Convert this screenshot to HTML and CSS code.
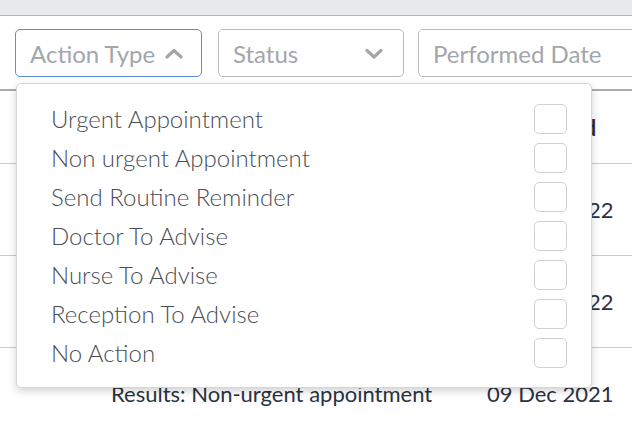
FILE: index.html
```html
<!DOCTYPE html>
<html>
<head>
<meta charset="utf-8">
<link rel="stylesheet" href="styles.css">
</head>
<body>
<div class="topbar"></div>
<div class="filters">
  <div class="select open">
    <span class="placeholder">Action Type</span>
    <svg class="chev" width="18" height="11" viewBox="0 0 18 11"><polyline points="2,9 9,2.5 16,9" fill="none" stroke="#a3a6ab" stroke-width="3.2" stroke-linecap="round" stroke-linejoin="round"/></svg>
    <div class="menu">
      <div class="item"><span>Urgent Appointment</span><span class="box"></span></div>
      <div class="item"><span>Non urgent Appointment</span><span class="box"></span></div>
      <div class="item"><span>Send Routine Reminder</span><span class="box"></span></div>
      <div class="item"><span>Doctor To Advise</span><span class="box"></span></div>
      <div class="item"><span>Nurse To Advise</span><span class="box"></span></div>
      <div class="item"><span>Reception To Advise</span><span class="box"></span></div>
      <div class="item"><span>No Action</span><span class="box"></span></div>
    </div>
  </div>
  <div class="select status">
    <span class="placeholder">Status</span>
    <svg class="chev" width="18" height="11" viewBox="0 0 18 11"><polyline points="2,2.5 9,9 16,2.5" fill="none" stroke="#a3a6ab" stroke-width="3.2" stroke-linecap="round" stroke-linejoin="round"/></svg>
  </div>
  <div class="select date">
    <span class="placeholder">Performed Date</span>
  </div>
</div>
<div class="grid">
  <div class="row head"><span></span><span></span><span class="hd">Performed</span></div>
  <div class="row"><span></span><span></span><span>09 Dec 2022</span></div>
  <div class="row"><span></span><span></span><span>08 Dec 2022</span></div>
  <div class="row"><span></span><span>Results: Non-urgent appointment</span><span>09 Dec 2021</span></div>
</div>
</body>
</html>
```
FILE: styles.css
```css
html, body {
  margin: 0;
  padding: 0;
  background: #ffffff;
  font-family: Lato, "Open Sans", sans-serif;
  overflow: hidden;
}
.topbar {
  height: 15px;
  background: #e8e9eb;
  border-bottom: 1px solid #b3b5b9;
}
.filters {
  display: flex;
  padding: 13px 0 0 15px;
}
.select {
  position: relative;
  box-sizing: border-box;
  height: 48px;
  border: 1px solid #b9bbbf;
  border-radius: 5px;
  display: flex;
  align-items: center;
  padding-left: 14px;
  flex: none;
}
.select.open {
  width: 187px;
  border-color: #5c8fd6;
  margin-right: 16px;
}
.select.status {
  width: 186px;
  margin-right: 14px;
  padding-right: 20px;
  justify-content: space-between;
}
.select.date {
  width: 260px;
}
.placeholder {
  font-size: 24px;
  color: #a3a6ab;
  white-space: nowrap;
}
.open .chev {
  margin-left: 10px;
}
.menu {
  position: absolute;
  left: 0;
  top: 53px;
  width: 576px;
  box-sizing: border-box;
  padding: 15px 24px 15px 34px;
  background: #fff;
  border: 1px solid #d4d6d9;
  border-radius: 5px;
  box-shadow: 0 3px 8px rgba(0,0,0,0.18);
  z-index: 2;
}
.item {
  height: 39px;
  display: flex;
  align-items: center;
  justify-content: space-between;
  font-family: "Lato Light", Lato, sans-serif;
  font-size: 24px;
  font-weight: 300;
  color: #4a4e56;
  white-space: nowrap;
}
.box {
  width: 33px;
  height: 30px;
  box-sizing: border-box;
  border: 1px solid #cfd1d4;
  border-radius: 5px;
}
.grid {
  margin-top: 12px;
  border-top: 2px solid #a9abaf;
  font-size: 22px;
  color: #2b3240;
}
.row {
  display: grid;
  grid-template-columns: 111px 376px 1fr;
  align-items: center;
  height: 92px;
  border-bottom: 1px solid #c9cbcf;
  box-sizing: border-box;
  white-space: nowrap;
}
.row.head {
  height: 73px;
  font-weight: 700;
}
.hd {
  padding-left: 5px;
}
```
